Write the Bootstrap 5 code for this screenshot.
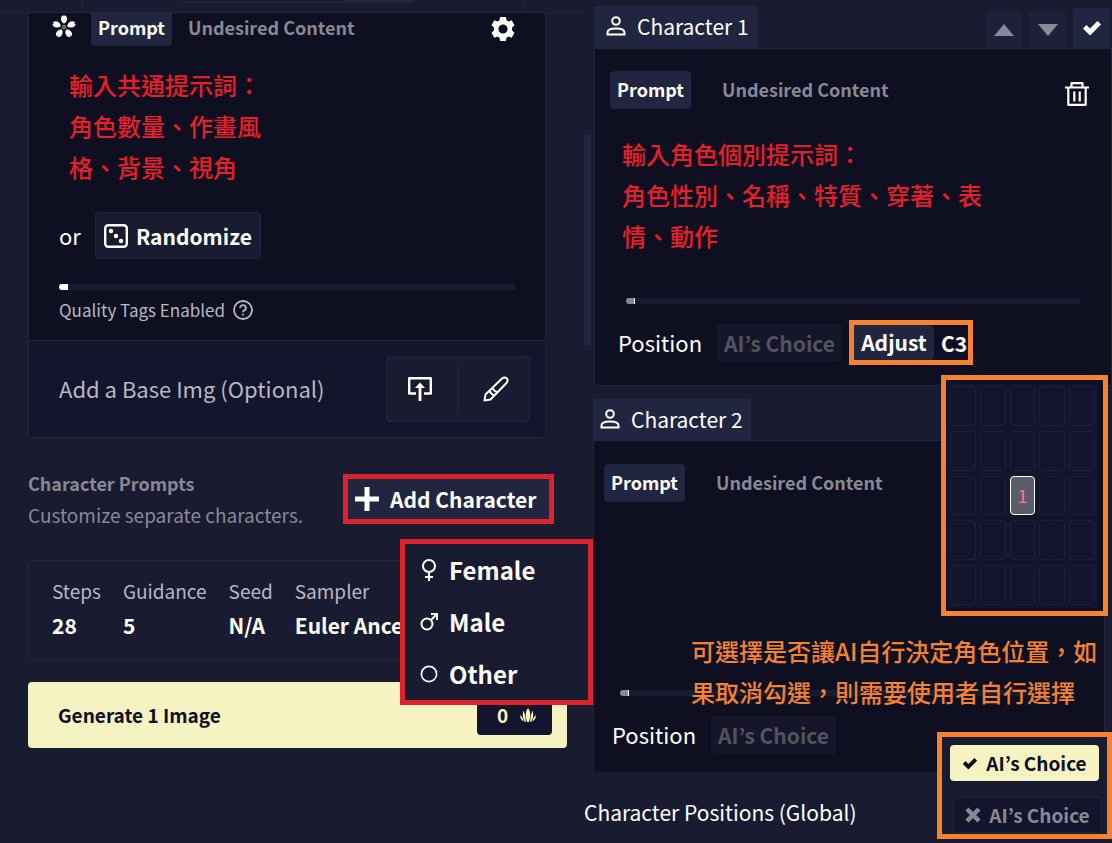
<!DOCTYPE html>
<html lang="en">
<head>
<meta charset="utf-8">
<meta name="viewport" content="width=device-width, initial-scale=1">
<title>Character Prompts</title>
<link href="https://cdn.jsdelivr.net/npm/bootstrap@5.3.0/dist/css/bootstrap.min.css" rel="stylesheet">
<style>
:root{--bg0:#0e0f21;--bg1:#13152c;--bg2:#191b31;--bg3:#22253f;--line:#22253f;--cream:#f5f3c2;--red:#dc222d;--orange:#f5822f}
body{background:var(--bg2);color:#fff;font-family:"Noto Sans CJK KR","Noto Sans",sans-serif;font-size:22px;line-height:30px}
svg{display:block;flex:none}
.btn{--bs-btn-color:#fff;--bs-btn-hover-color:#fff;--bs-btn-border-width:0;--bs-btn-border-radius:4px;--bs-btn-line-height:30px;--bs-btn-padding-x:7px;--bs-btn-padding-y:3px;--bs-btn-font-size:21px;white-space:nowrap}
.icon-btn{display:grid;place-items:center}
.shell{display:grid;grid-template-columns:584fr 528fr}
.soft{color:#b7b8c1}
.dim{color:#888994}
.marked-red{border:5px solid var(--red)}
.marked-orange{border:5px solid var(--orange)}
.note{font-family:"Noto Sans CJK TC","Noto Sans",sans-serif;font-size:24px;font-weight:500;line-height:41px;margin:0}
.note-red{color:#e81e2a}
.note-orange{color:var(--orange)}
.note-base{padding:18px 0 25px 10px}
.note-char{padding:24px 0 42px 12px}
.tab-on,.tab-off{--bs-btn-font-size:18px;font-weight:700;height:38px;padding-bottom:5px}
.tab-on{background:var(--bg3)}
.tab-off,.tab-off:hover{color:#888994}
.meter{--bs-progress-height:6px;--bs-progress-bg:var(--bg2);--bs-progress-bar-bg:#fff;--bs-progress-border-radius:3px}
.meter-dim{--bs-progress-bar-bg:#888994}
.meter-dim .progress-bar{border-right:1px solid #fff}

/* left column */
.side{padding-left:28px}
.topline{height:13px;border-bottom:1px solid var(--line);margin-left:-28px;padding:0 59px 0 82px}
.topline>div{border:solid var(--line);border-width:0 1px;height:12px;padding:0 109px 0 94px}
.topline i{display:block;height:3px;border-radius:0 0 4px 4px;border-bottom:1px solid var(--bg3);background:linear-gradient(90deg,transparent 70%,var(--bg3) 70%)}
.base-card{margin-right:38px;border:1px solid var(--line);border-top:0;border-radius:0 0 4px 4px;background:var(--bg0)}
.base-top{padding:0 30px 18px}
.tabs{margin-left:-8px;gap:14px}
.tabs .tab-on,.tabs .tab-off{--bs-btn-line-height:26px;height:33px;padding-top:0;border-radius:0 0 4px 4px}
.tabs .tab-off{margin-left:-5px}
.or-row{gap:14px;padding-bottom:1px}
.or-row>span{padding-bottom:2px}
.rand{height:47px;background:var(--bg2);border:1px solid var(--bg3);font-weight:700;--bs-btn-padding-x:8px}
.quality{font-size:17px;line-height:24px}
.base-img{background:var(--bg1);border-top:1px solid var(--line);padding:15px 15px 15px 30px;border-radius:0 0 4px 4px}
.base-img>span{padding-bottom:3px}
.img-tools{border:1px solid var(--line);border-radius:4px;background:var(--bg2);height:66px}
.img-tools .btn{width:71px;height:50px}
.img-tools .btn:first-child{padding-right:13px}
.img-tools .btn+.btn{border-left:1px solid var(--line);border-radius:0;padding-left:11px}
.addrow{padding:33px 30px 33px 0}
.addrow h2{font-size:18px;line-height:24px;font-weight:700;margin:0 0 8px}
.addrow p{font-size:19px;line-height:24px;margin:0}
.addbtn{width:201px;height:40px;background:var(--bg3);border-radius:0;font-weight:700;gap:11px}
.gender{top:60px;right:-44px;width:193px;height:166px;background:var(--bg2);z-index:3}
.gender button{display:flex;align-items:center;gap:11px;width:100%;height:52px;padding:0 15px;border:0;background:none;color:inherit;font-size:24px;font-weight:700}
.params{margin:0 17px 0 0;height:100px;border:1px solid var(--line);border-radius:4px;padding:16px 23px;gap:22px}
.params dt{font-weight:400;color:#b7b8c1;font-size:19px;line-height:28px}
.params dd{margin:0;font-size:21px;line-height:40px;font-weight:700;white-space:nowrap}
.gen,.gen:hover{background:var(--cream);color:var(--bg0);height:66px;margin:22px 17px 0 0;padding:0 15px 0 30px;font-size:19px;font-weight:700}
.cost{background:var(--bg1);color:var(--cream);width:75px;height:40px;border-radius:4px;gap:12px;padding-left:4px}

/* right column */
.chars{padding:6px 0 0 10px}
.bar-thumb{left:0;top:134px;width:7px;height:212px;border-radius:4px;background:var(--bg3)}
.head{height:42px;gap:7px;padding-right:2px}
.who{height:100%;background:var(--bg3);padding:0 8px 2px 12px;gap:11px;font-size:21px}
.hbtn{width:37px;height:37px;background:#1e2039;border-radius:4px 4px 0 0;padding:0}
.hbtn-on{height:40px;background:var(--bg3)}
.char-card{background:var(--bg0);border:1px solid var(--line);padding:22px 14px 18px 15px}
.pos{gap:15px;padding-left:8px;height:45px;margin:16px 0 2px}
.pos>span{padding-bottom:2px}
.choice-off,.choice-off:disabled{background:#151629;color:#52535f;font-weight:700;height:38px;opacity:1}
.choice{font-feature-settings:"palt"}
.pair{width:124px;height:45px;margin-left:-8px;gap:7px;font-size:21px;white-space:nowrap}
.adjust,.adjust:hover{background:var(--bg3);width:80px;height:35px;font-weight:700;padding:0 0 2px;border-radius:0 4px 4px 0}
.second{margin:13px 7px 0 -1px}
.second .head{height:41px}
.second .who{padding-left:7px}
.second .char-card{border-bottom:0;padding:23px 14px 13px 10px}
.blank{height:188px}
.over{left:97px;top:189px;white-space:nowrap;z-index:1}
.picker{top:-66px;right:-4px;width:167px;height:241px;background:var(--bg0);z-index:2;padding:3px 5px 3px 1px}
.cells{display:grid;grid-template-columns:repeat(5,1fr);grid-auto-rows:1fr;gap:5px 4px;background:var(--bg1);padding:3px;height:100%}
.cells button{border:1px solid #1d1f36;border-radius:4px;background:none;padding:0;font-size:18px;line-height:20px;min-height:0}
.cells .picked{background:#5b5c6a;border-color:#fff;color:#ff7391}
.global{height:72px;margin-left:-10px;padding-top:24px;font-size:21px;line-height:32px}
.toggle{top:-40px;right:0;width:175px;height:107px;background:var(--bg2);padding:8px 5px 2px 8px}
.pick-on,.pick-off{width:149px;height:36px;font-weight:700;gap:8px;--bs-btn-font-size:19px}
.pick-on,.pick-on:hover{background:var(--cream);color:var(--bg0)}
.pick-off,.pick-off:hover{background:var(--bg1);color:#888994;border:1px solid var(--bg3);margin:16px 0 0 3px}
</style>
</head>
<body>
<svg width="0" height="0" class="position-absolute" aria-hidden="true">
<symbol id="person" viewBox="0 0 20 20"><g fill="none" stroke="currentColor" stroke-width="2"><circle cx="10" cy="5" r="3.8"/><path d="M1.500 18.500V16.500Q1.500 12.500 10 12.500T18.500 16.500V18.500Z"/></g></symbol>
<symbol id="tick" viewBox="0 0 20 16"><path d="M1 8.500L4.500 5L8 8.500L15.500 1L19 4.500L8 15.500Z" fill="currentColor"/></symbol>
</svg>
<main class="shell">
<section class="side">
  <div class="topline"><div><i></i></div></div>
  <div class="base-card">
    <div class="base-top">
      <div class="tabs d-flex align-items-start">
        <svg width="26" height="26" viewBox="-13 -14 26 26" fill="#fff" role="img" aria-label="Base prompt"><defs><path id="petal" d="M0-3.200Q-4-6-2.700-10L-1-12L0-10.600L1-12L2.700-10Q4-6 0-3.200Z"/></defs><use href="#petal"/><use href="#petal" transform="rotate(72)"/><use href="#petal" transform="rotate(144)"/><use href="#petal" transform="rotate(216)"/><use href="#petal" transform="rotate(288)"/><circle r="1.500" fill="none" stroke="#fff" stroke-width=".7"/></svg>
        <button class="btn tab-on" type="button">Prompt</button>
        <button class="btn tab-off" type="button">Undesired Content</button>
        <button class="btn p-0 ms-auto mt-1" type="button" aria-label="Settings"><svg width="24" height="24" viewBox="0 0 24 24"><path fill="#fff" fill-rule="evenodd" d="M9.200 0H14.800L15.500 3.300L17.500 4.400L20.700 3.300L23.500 8.200L21.100 10.600V13.400L23.500 15.800L20.700 20.700L17.500 19.600L15.500 20.700L14.800 24H9.200L8.500 20.700L6.500 19.600L3.300 20.700L.5 15.800L2.900 13.400V10.600L.5 8.200L3.300 3.300L6.500 4.400L8.500 3.300ZM12 7.400A4.600 4.600 0 1 0 12 16.600A4.600 4.600 0 1 0 12 7.400Z"/></svg></button>
      </div>
      <p class="note note-red note-base" lang="zh-Hant">輸入共通提示詞：<br>角色數量、作畫風<br>格、背景、視角</p>
      <div class="or-row d-flex align-items-center">
        <span>or</span>
        <button class="btn rand d-flex align-items-center gap-2" type="button"><svg width="24" height="24" viewBox="0 0 24 24"><rect x="1.200" y="1.200" width="21.600" height="21.600" rx="3" fill="none" stroke="#fff" stroke-width="2.400"/><g fill="#fff"><circle cx="7" cy="7" r="2.200"/><circle cx="12" cy="12" r="2.200"/><circle cx="17" cy="17" r="2.200"/></g></svg>Randomize</button>
      </div>
      <div class="progress meter mt-4" role="progressbar" aria-label="Prompt length" aria-valuenow="2"><div class="progress-bar" style="width:2%"></div></div>
      <div class="quality d-flex align-items-center soft mt-2 gap-2">Quality Tags Enabled
        <svg width="20" height="20" viewBox="0 0 20 20" fill="none" stroke="currentColor" stroke-width="1.800"><circle cx="10" cy="10" r="9"/><path d="M7.200 8A2.800 2.800 0 1 1 10.800 10.600Q10 11 10 12.200M10 13.800V15.600"/></svg></div>
    </div>
    <div class="base-img d-flex align-items-center justify-content-between">
      <span class="soft">Add a Base Img (Optional)</span>
      <div class="img-tools d-flex align-items-center">
        <button class="btn icon-btn" type="button" aria-label="Upload image"><svg width="24" height="24" viewBox="0 0 24 24"><path d="M8 16.500H1.200V1.200H22.800V16.500H16" fill="none" stroke="#fff" stroke-width="2.400" stroke-linejoin="round"/><path d="M12 24V9" stroke="#fff" stroke-width="2.800"/><path d="M7 11L12 5.500L17 11Z" fill="#fff"/></svg></button>
        <button class="btn icon-btn" type="button" aria-label="Paint image"><svg width="26" height="26" viewBox="0 0 26 26" fill="none" stroke="#fff" stroke-width="2" stroke-linejoin="round"><path d="M1.500 24.500L2.500 18.500L19 2.500Q21.500 .5 24 2.500Q25.500 4.500 23.500 7L7.500 23.500ZM6.500 14.500Q8 18.500 11.500 19.500M9.500 11.500Q11 15.500 14.500 16.500"/></svg></button>
      </div>
    </div>
  </div>
  <div class="addrow d-flex justify-content-between align-items-center">
    <div class="dim"><h2>Character Prompts</h2><p>Customize separate characters.</p></div>
    <div class="marked-red position-relative">
      <button class="btn addbtn d-flex align-items-center" type="button" aria-expanded="true"><svg width="24" height="24" viewBox="0 0 24 24"><path d="M0 12H24M12 0V24" stroke="#fff" stroke-width="5"/></svg>Add Character</button>
      <div class="gender marked-red position-absolute">
        <button type="button"><svg width="18" height="24" viewBox="0 0 18 24" fill="none" stroke="#fff" stroke-width="2"><circle cx="9" cy="8" r="6"/><path d="M9 14V23M5 19H13"/></svg>Female</button>
        <button type="button"><svg width="18" height="20" viewBox="0 0 18 20" fill="none" stroke="#fff" stroke-width="2"><circle cx="7" cy="12" r="5.500"/><path d="M11 8L17 2M11 2H17V8"/></svg>Male</button>
        <button type="button"><svg width="18" height="18" viewBox="0 0 18 18" fill="none" stroke="#fff" stroke-width="1.600"><circle cx="9" cy="9" r="7.600"/></svg>Other</button>
      </div>
    </div>
  </div>
  <dl class="params d-flex">
    <div><dt>Steps</dt><dd>28</dd></div>
    <div><dt>Guidance</dt><dd>5</dd></div>
    <div><dt>Seed</dt><dd>N/A</dd></div>
    <div><dt>Sampler</dt><dd>Euler Ance</dd></div>
  </dl>
  <div class="d-grid"><button class="btn gen d-flex align-items-center justify-content-between" type="button">Generate 1 Image
    <span class="cost d-flex align-items-center justify-content-center">0<svg width="16" height="15" viewBox="0 0 16 15" fill="currentColor"><path d="M8 0Q12 5 9 14H7Q4 5 8 0ZM3.500 2.500Q6 8 5.800 14H4.800Q1.500 8 3.500 2.500ZM12.500 2.500Q10 8 10.200 14H11.200Q14.500 8 12.500 2.500ZM0 7Q3 9 3.600 13.500Q0 11 0 7ZM16 7Q13 9 12.400 13.500Q16 11 16 7Z"/></svg></span></button></div>
</section>

<section class="chars position-relative">
  <div class="bar-thumb position-absolute"></div>
  <div class="head d-flex align-items-end">
    <div class="who d-flex align-items-center me-auto"><svg width="20" height="20"><use href="#person"/></svg>Character 1</div>
    <button class="btn hbtn icon-btn" type="button" aria-label="Move up"><svg width="20" height="12"><path d="M0 12L10 0L20 12Z" fill="#888994"/></svg></button>
    <button class="btn hbtn icon-btn" type="button" aria-label="Move down"><svg width="20" height="12"><path d="M0 0L10 12L20 0Z" fill="#888994"/></svg></button>
    <button class="btn hbtn hbtn-on icon-btn" type="button" aria-label="Done"><svg width="20" height="16"><use href="#tick"/></svg></button>
  </div>
  <article class="char-card">
    <div class="d-flex align-items-center">
      <button class="btn tab-on" type="button">Prompt</button>
      <button class="btn tab-off ms-4" type="button">Undesired Content</button>
      <button class="btn p-0 ms-auto me-2 mt-2" type="button" aria-label="Delete"><svg width="24" height="24" viewBox="0 0 24 24" fill="none" stroke="#fff" stroke-width="2.200" stroke-linejoin="round"><path d="M0 5.500H24M6.500 5V1.200H17.500V5M3.300 6V22.800H20.700V6M9.300 9.500V19.500M14.700 9.500V19.500"/></svg></button>
    </div>
    <p class="note note-red note-char" lang="zh-Hant">輸入角色個別提示詞：<br>角色性別、名稱、特質、穿著、表<br>情、動作</p>
    <div class="progress meter meter-dim mx-3" role="progressbar" aria-label="Character 1 prompt length" aria-valuenow="2"><div class="progress-bar" style="width:2%"></div></div>
    <div class="pos d-flex align-items-center">
      <span>Position</span>
      <button class="btn choice choice-off" type="button" disabled>AI’s Choice</button>
      <div class="pair marked-orange d-flex align-items-center fw-bold"><button class="btn adjust" type="button">Adjust</button><span>C3</span></div>
    </div>
  </article>
  <div class="second">
    <div class="head d-flex"><div class="who d-flex align-items-center"><svg width="20" height="20"><use href="#person"/></svg>Character 2</div></div>
    <article class="char-card position-relative">
      <div class="d-flex align-items-center">
        <button class="btn tab-on" type="button">Prompt</button>
        <button class="btn tab-off ms-4" type="button">Undesired Content</button>
      </div>
      <div class="blank"></div>
      <div class="progress meter meter-dim mx-3" role="progressbar" aria-label="Character 2 prompt length" aria-valuenow="2"><div class="progress-bar" style="width:2%"></div></div>
      <div class="pos d-flex align-items-center">
        <span>Position</span>
        <button class="btn choice choice-off" type="button" disabled>AI’s Choice</button>
      </div>
      <p class="note note-orange over position-absolute" lang="zh-Hant">可選擇是否讓AI自行決定角色位置，如<br>果取消勾選，則需要使用者自行選擇</p>
      <div class="picker marked-orange position-absolute">
        <div class="cells" id="cells"></div>
      </div>
    </article>
  </div>
  <div class="global position-relative">Character Positions (Global)
    <div class="toggle marked-orange position-absolute">
      <button class="btn choice pick-on d-flex align-items-center justify-content-center" type="button"><svg width="16" height="13"><use href="#tick"/></svg>AI’s Choice</button>
      <button class="btn choice pick-off d-flex align-items-center justify-content-center" type="button"><svg width="16" height="16"><path d="M2 2L14 14M14 2L2 14" stroke="currentColor" stroke-width="4.500"/></svg>AI’s Choice</button>
    </div>
  </div>
</section>
</main>
<script>
// Five by five grid of positions; the middle one (C3) is taken by character 1.
document.getElementById('cells').innerHTML = Array.from({length: 25}, (_, i) => {
  const name = 'ABCDE'[i % 5] + (Math.floor(i / 5) + 1);
  return `<button type="button" aria-label="${name}" class="${i === 12 ? 'picked' : ''}">${i === 12 ? '1' : ''}</button>`;
}).join('');
</script>
<script src="https://cdn.jsdelivr.net/npm/bootstrap@5.3.0/dist/js/bootstrap.bundle.min.js"></script>
</body>
</html>
